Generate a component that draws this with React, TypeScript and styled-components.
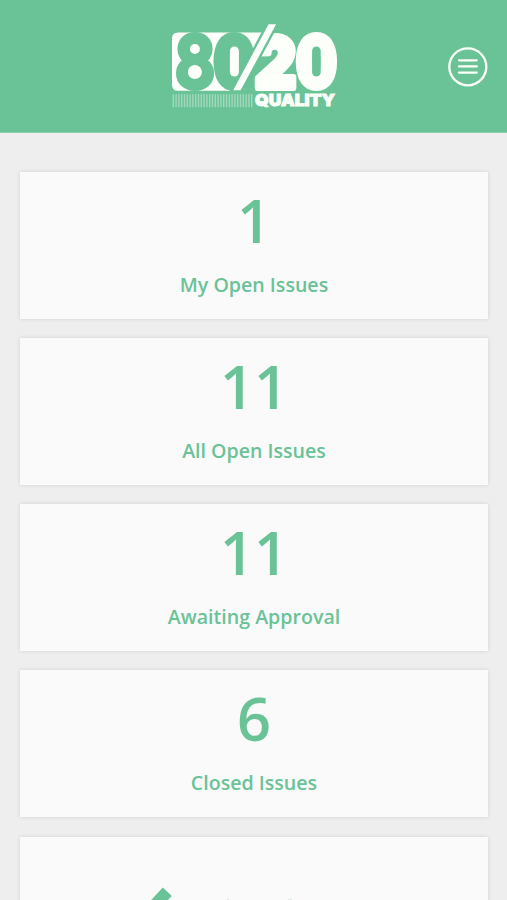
import React from 'react';
import styled, { createGlobalStyle } from 'styled-components';

const green = '#6ac297';
const white = '#fdfffa';

const GlobalStyle = createGlobalStyle`
  body { margin: 0; background: #eeeeee; }
  * { box-sizing: border-box; }
`;

const Screen = styled.div`
  width: 100%;
  height: 900px;
  overflow: hidden;
  background: #eeeeee;
  color: ${green};
  font-family: 'Open Sans', 'Noto Sans', sans-serif;
`;

const Header = styled.header`
  display: grid;
  grid-template-columns: 1fr 170px 1fr;
  height: 133px;
  background: ${green};
  border-bottom: 1px solid #8fd0b0;
`;

const Logo = styled.svg`
  grid-column: 2;
  display: block;
  margin: 20px 0 0 -0.5px;
  width: 170px;
  height: 92px;
  overflow: visible;
`;

const MenuButton = styled.button`
  justify-self: end;
  width: 40px;
  height: 40px;
  margin: 47px 19px 0 0;
  padding: 0;
  border: 0;
  background: none;
  cursor: pointer;

  svg { display: block; }
`;

const CardList = styled.main`
  display: flex;
  flex-direction: column;
  gap: 19.15px;
  padding: 39px 19.4px 0 20.4px;
`;

const Card = styled.section`
  display: flex;
  flex-direction: column;
  align-items: center;
  flex-shrink: 0;
  height: 147px;
  background: #fafafa;
  box-shadow: 0 0 4px rgba(0, 0, 0, 0.12);
`;

const Count = styled.strong`
  height: 82px;
  margin-top: 7px;
  font-size: 59.5px;
  font-weight: 600;
  line-height: 82px;
`;

const Label = styled.span`
  margin-top: 9.6px;
  font-size: 19.6px;
  font-weight: 600;
  line-height: 28px;
`;

const CheckDrawing = styled.svg`
  display: block;
  width: 220px;
  height: 147px;
`;

const cards = [
  { count: 1, label: 'My Open Issues' },
  { count: 11, label: 'All Open Issues' },
  { count: 11, label: 'Awaiting Approval' },
  { count: 6, label: 'Closed Issues' },
];

const bars = Array.from({ length: 29 }, (_, i) => 4.6 + i * 2.8);

function BrandLogo() {
  return (
    <Logo viewBox="168 20 170 92" role="img" aria-label="80/20 Quality">
      <path d="M178 32.5H265L230 90.8H178Q172 90.8 172 84.8V38.5Q172 32.5 178 32.5Z" fill={white} />
      <g fontFamily="Inter" fontWeight="900" fontSize="70" textAnchor="middle" strokeLinejoin="round">
        <g fill={green} stroke={green} strokeWidth="6">
          <text transform="translate(194.9 87.4) scale(.78 1)">8</text>
          <text transform="translate(234.2 87.4) scale(.81 1)">0</text>
        </g>
        <g fill={white} stroke={white} strokeWidth="6">
          <text transform="translate(275.3 87.6) scale(.92 1)">2</text>
          <text transform="translate(316.4 87.4) scale(.81 1)">0</text>
        </g>
      </g>
      <g fill={white}>
        <circle cx="194.9" cy="49" r="5" />
        <circle cx="194.9" cy="72" r="7" />
        <rect x="229.9" y="46.5" width="9" height="30" rx="4.5" />
      </g>
      <rect x="312.1" y="46.5" width="8.6" height="30" rx="4.3" fill={green} />
      <path d="M267.9 23H278.1L241.4 91.4H231.2Z" fill={white} stroke={green} strokeWidth="2.4" />
      <g fill={white} opacity=".38">
        {bars.map((x) => <rect key={x} x={168 + x} y="94.2" width="1.4" height="13" />)}
      </g>
      <text x="255" y="106" fill={white} stroke={white} strokeWidth=".9" fontFamily="Inter" fontWeight="900" fontSize="16.5" textLength="80" lengthAdjust="spacingAndGlyphs">QUALITY</text>
    </Logo>
  );
}

export default function App() {
  return (
    <>
      <GlobalStyle />
      <Screen>
        <Header>
          <BrandLogo />
          <MenuButton aria-label="Menu">
            <svg width="40" height="40" viewBox="0 0 40 40" fill="none" stroke={white}>
              <circle cx="19.8" cy="19.8" r="18.5" strokeWidth="2.3" />
              <path d="M11 13.3H28.8M11 19.4H28.8M11 25.6H28.8" strokeWidth="2.3" strokeLinecap="round" />
            </svg>
          </MenuButton>
        </Header>
        <CardList>
          {cards.map((card) => (
            <Card key={card.label}>
              <Count>{card.count}</Count>
              <Label>{card.label}</Label>
            </Card>
          ))}
          <Card>
            <CheckDrawing viewBox="0 0 220 147">
              <path d="M18.8 50.5L27.8 59L-4 91L-20 75L-12 67L-4 75Z" fill={green} />
              <path d="M83 63H85M144 63H148" stroke="#c5d0ca" strokeWidth="1" />
            </CheckDrawing>
          </Card>
        </CardList>
      </Screen>
    </>
  );
}
